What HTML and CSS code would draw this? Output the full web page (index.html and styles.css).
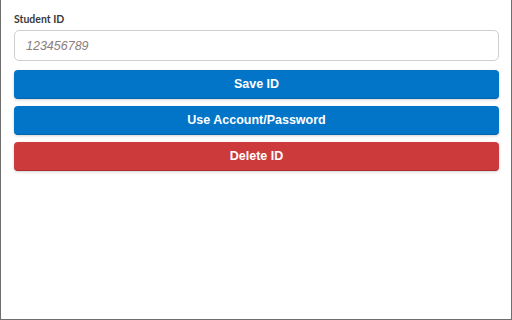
FILE: index.html
```html
<!DOCTYPE html>
<html>
<head>
<meta charset="utf-8">
<link rel="stylesheet" href="styles.css">
</head>
<body>
<div class="frame">
  <div class="form">
    <label class="label" for="sid">Student ID</label>
    <input id="sid" class="input" type="text" placeholder="123456789">
    <div class="actions">
      <button class="btn btn-blue">Save ID</button>
      <button class="btn btn-blue">Use Account/Password</button>
      <button class="btn btn-red">Delete ID</button>
    </div>
  </div>
</div>
</body>
</html>
```
FILE: styles.css
```css
html, body {
  margin: 0;
  padding: 0;
  background: #fff;
}
.frame {
  box-sizing: border-box;
  width: 512px;
  height: 320px;
  border-left: 1px solid #6e6e6e;
  border-right: 1px solid #6e6e6e;
  border-bottom: 1px solid #6e6e6e;
  padding: 12px 13px 0 13px;
}
.form {
  display: flex;
  flex-direction: column;
}
.label {
  font-family: "Lato", "Open Sans", sans-serif;
  font-weight: 700;
  font-size: 10.5px;
  color: #3a3a3a;
  line-height: 14px;
  margin-bottom: 4px;
}
.input {
  box-sizing: border-box;
  height: 31px;
  width: 485px;
  border: 1px solid #cfcfcf;
  border-radius: 5px;
  padding: 0 11px;
  font-family: "Liberation Sans", Arial, sans-serif;
  font-size: 12.5px;
  font-style: italic;
  color: #333;
  outline: none;
  margin: 0;
}
.input::placeholder {
  color: #8c7e7e;
  font-style: italic;
}
.actions {
  display: flex;
  flex-direction: column;
  gap: 7px;
  margin-top: 9px;
}
.btn {
  box-sizing: border-box;
  height: 29px;
  width: 485px;
  border: none;
  border-radius: 4px;
  color: #fff;
  font-family: "Liberation Sans", Arial, sans-serif;
  font-weight: 700;
  font-size: 12.5px;
  margin: 0;
  padding: 0;
  box-shadow: 0 1px 3px rgba(0,0,0,0.18);
  cursor: pointer;
}
.btn-blue {
  background: #0275c8;
  border-bottom: 1px solid #0366ad;
}
.btn-red {
  background: #cc3a3b;
  border-bottom: 1px solid #b02a2c;
}
```
